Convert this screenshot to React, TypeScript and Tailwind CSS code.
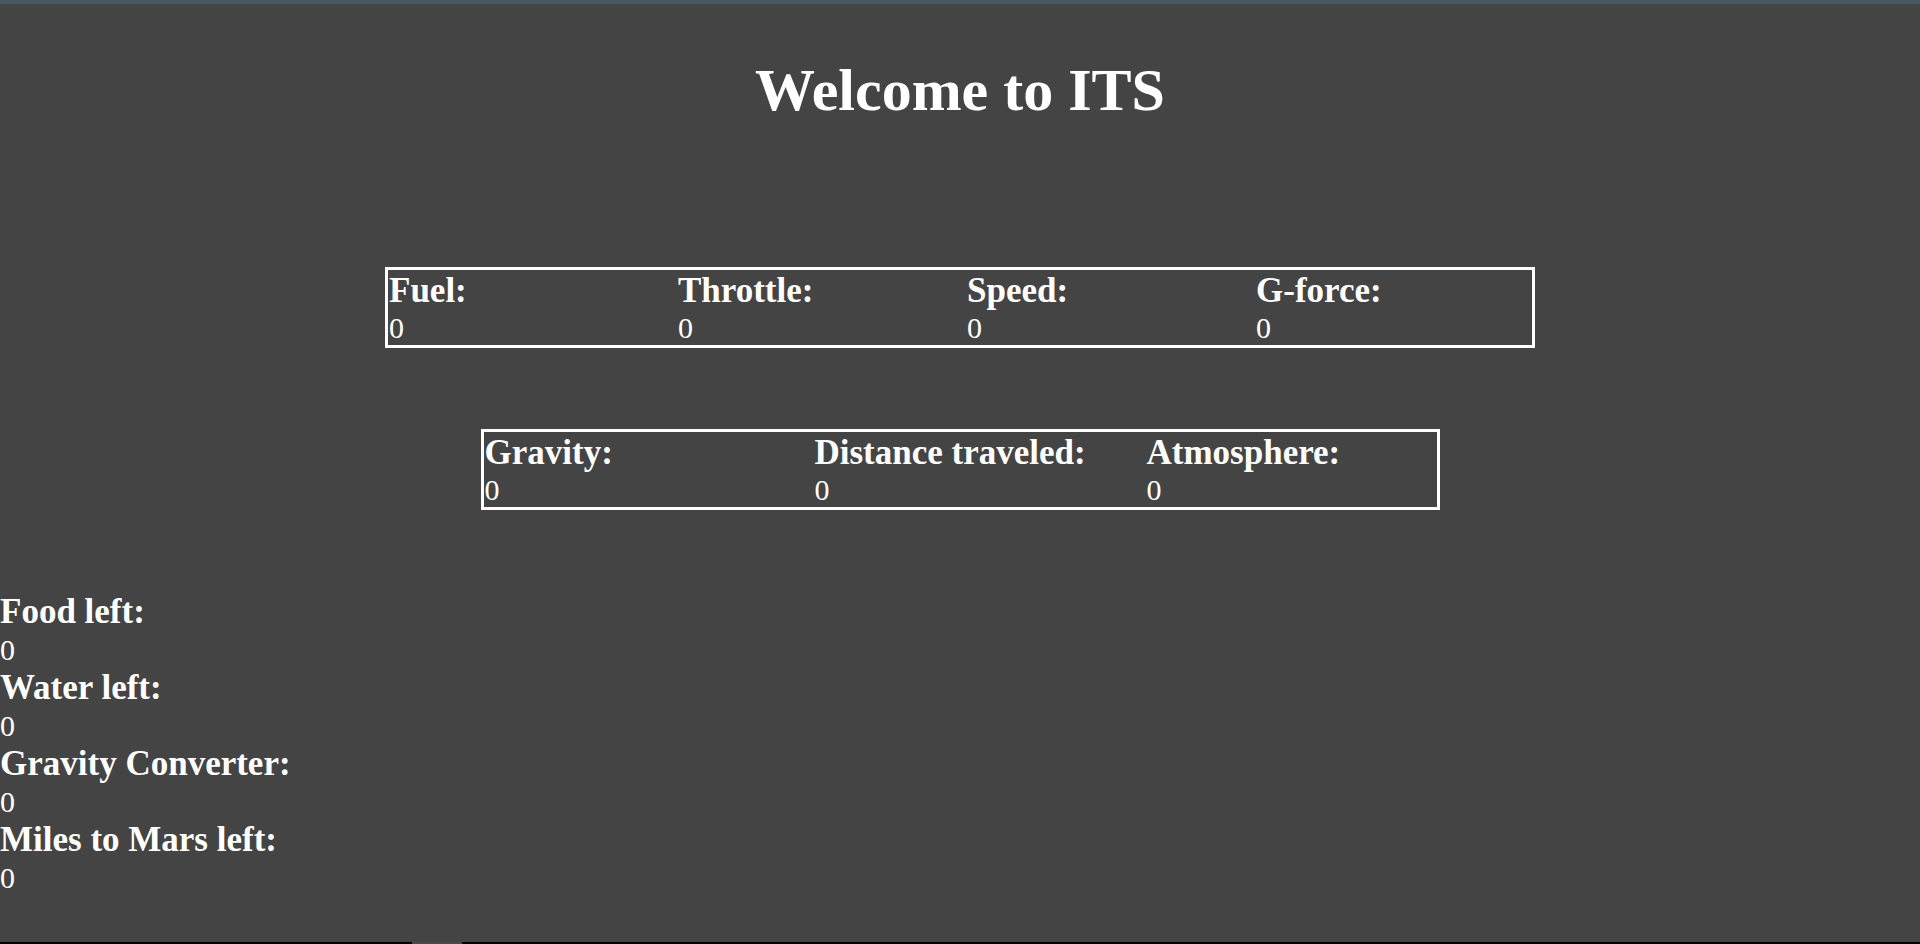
import React from "react";

const row1 = ["Fuel:", "Throttle:", "Speed:", "G-force:"];
const row2 = ["Gravity:", "Distance traveled:", "Atmosphere:"];
const list = ["Food left:", "Water left:", "Gravity Converter:", "Miles to Mars left:"];

function Cell({ label, value }: { label: string; value: string }) {
  return (
    <div className="pl-[1px] whitespace-nowrap">
      <div className="text-[35px] font-bold leading-[41px]">{label}</div>
      <div className="text-[30px] leading-[34px]">{value}</div>
    </div>
  );
}

export default function App() {
  return (
    <div
      className="h-[944px] w-full bg-[#444444] text-white flex flex-col overflow-hidden"
      style={{ fontFamily: '"Liberation Serif", "Times New Roman", serif' }}
    >
      <div className="h-[4px] bg-[#465a63] shrink-0" />
      <main className="flex-1 flex flex-col">
        <h1 className="pt-[52px] text-center text-[60px] font-bold leading-[69px]">Welcome to ITS</h1>

        <div className="mt-[142px] mx-auto w-[1150px] border-[3px] border-white grid grid-cols-[289px_289px_289px_1fr]">
          {row1.map((l) => (
            <Cell key={l} label={l} value="0" />
          ))}
        </div>

        <div className="mt-[81px] mx-auto w-[959px] border-[3px] border-white grid grid-cols-[330px_332px_1fr]">
          {row2.map((l) => (
            <Cell key={l} label={l} value="0" />
          ))}
        </div>

        <div className="mt-[81px] flex flex-col">
          {list.map((l) => (
            <div key={l} className="whitespace-nowrap">
              <div className="text-[35px] font-bold leading-[41px]">{l}</div>
              <div className="text-[30px] leading-[35px]">0</div>
            </div>
          ))}
        </div>
      </main>
      <div className="h-[2px] bg-black shrink-0 flex">
        <div className="w-[412px]" />
        <div className="w-[50px] bg-[#4a4a4a]" />
      </div>
    </div>
  );
}
